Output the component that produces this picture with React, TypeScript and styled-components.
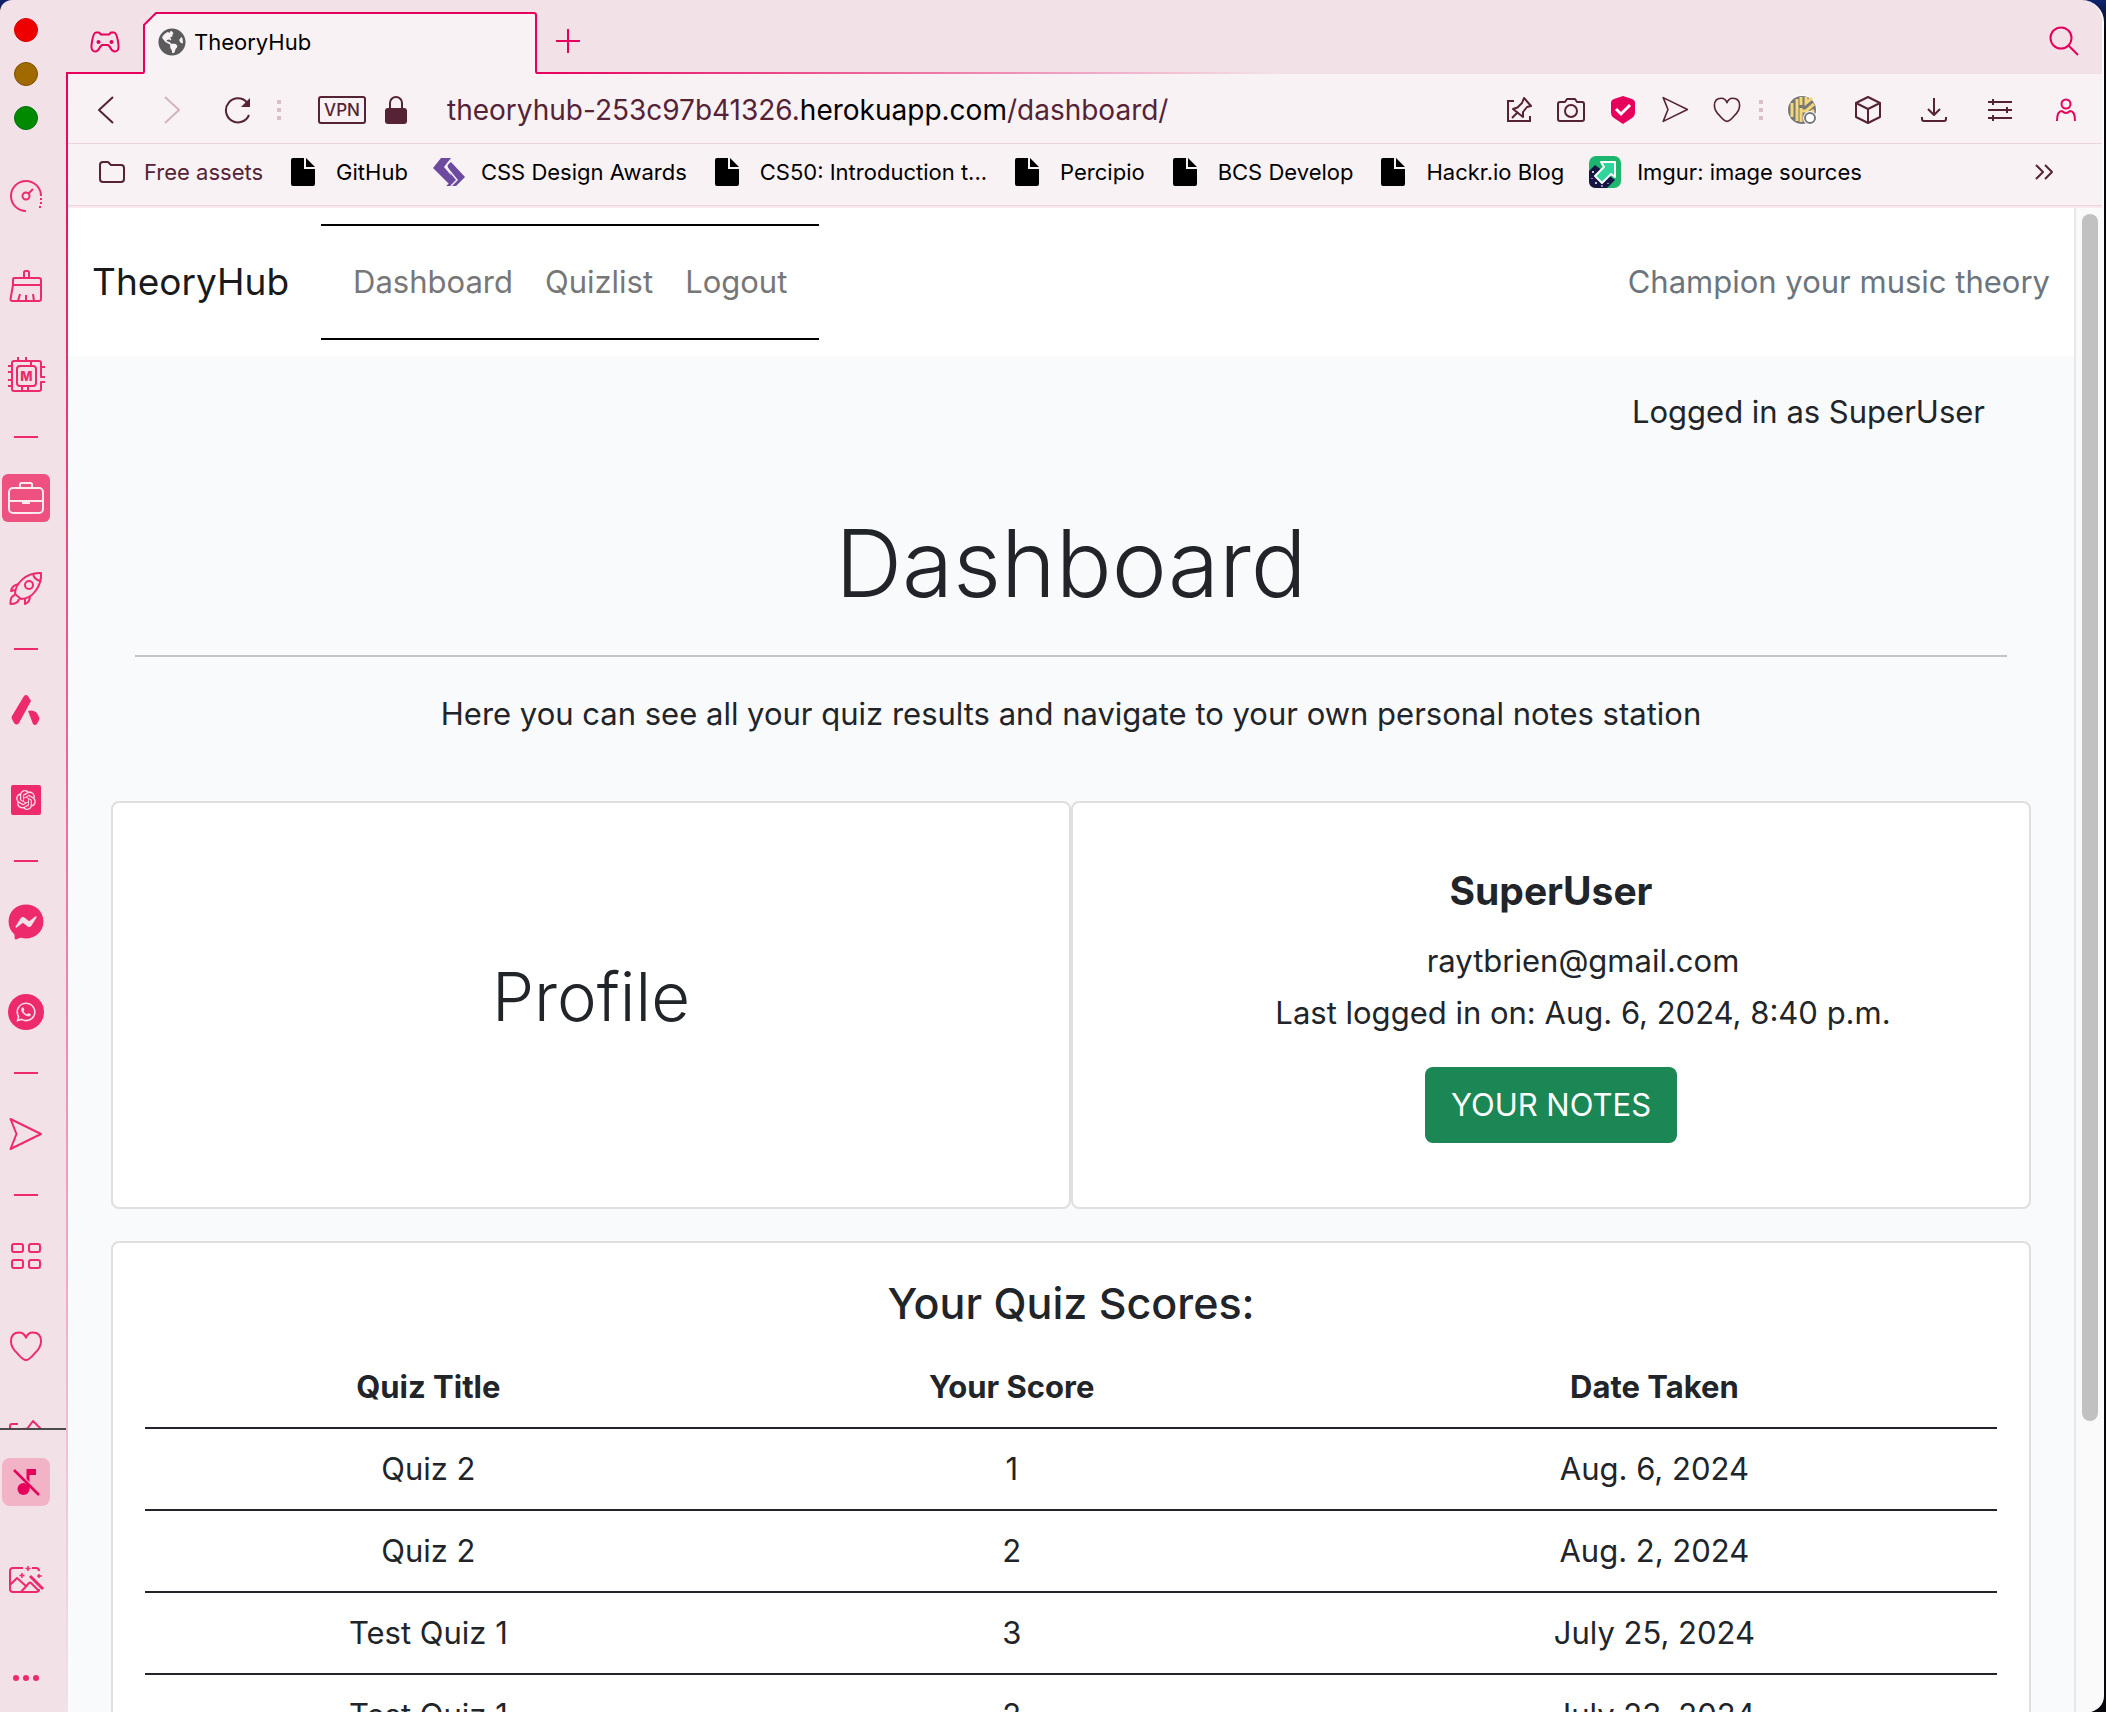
import React from "react";
import styled, { createGlobalStyle } from "styled-components";
import { FaFacebookMessenger, FaGlobeAmericas, FaWhatsapp } from "react-icons/fa";
import { RiOpenaiFill } from "react-icons/ri";

const PINK = "#e6005c";
const ROSE = "#ed2a6b";
const WINE = "#552236";
const STRIP = "#f3e1e8";
const BAR = "#f8f2f4";
const INK = "#212529";

const GlobalStyle = createGlobalStyle`
  *, *::before, *::after { box-sizing: border-box; }
  body {
    margin: 0;
    font-family: Inter, "Liberation Sans", sans-serif;
    color: ${INK};
  }
  button { font: inherit; color: inherit; background: none; border: 0; padding: 0; }
  a { color: inherit; text-decoration: none; }
  svg { display: block; flex: none; }
`;

/* ---------- window frame ---------- */

const Desktop = styled.div`
  height: 100vh;
  padding-right: 2px;
  background: linear-gradient(#10246e, #07070b 32px, #07070b);
`;

const BrowserWindow = styled.div`
  display: grid;
  grid-template-columns: 66px minmax(0, 1fr);
  height: 100%;
  overflow: hidden;
  border-right: 2px solid #fdfafb;
  border-radius: 12px 22px 16px 0;
  background: ${STRIP};
`;

/* ---------- sidebar ---------- */

const Sidebar = styled.aside`
  display: flex;
  flex-direction: column;
  min-height: 0;
  color: ${ROSE};
`;

const TrafficLights = styled.div`
  display: grid;
  gap: 20px;
  flex: none;
  padding: 18px 14px 21px;
`;

const Light = styled.button<{ $fill: string; $edge: string }>`
  width: 24px;
  height: 24px;
  border: 1px solid ${(p) => p.$edge};
  border-radius: 50%;
  background: ${(p) => p.$fill};
`;

const Dock = styled.nav`
  flex: 1;
  min-height: 0;
  overflow: hidden;
`;

const DockSlot = styled.button`
  display: grid;
  place-items: center;
  width: 52px;
  height: 90px;
`;

const DockRule = styled.div`
  width: 24px;
  height: 2px;
  margin: 15px 14px;
  background: ${ROSE};
`;

const Tile = styled.span<{ $bg: string; $fg: string; $size: number; $radius: number }>`
  display: grid;
  place-items: center;
  width: ${(p) => p.$size}px;
  height: ${(p) => p.$size}px;
  border-radius: ${(p) => p.$radius}px;
  background: ${(p) => p.$bg};
  color: ${(p) => p.$fg};
`;

const DockFooter = styled.div`
  display: grid;
  gap: 50px;
  flex: none;
  padding: 28px 0 10px;
  border-top: 2px solid #4c4a4c;
`;

const FooterButton = styled.button`
  display: grid;
  place-items: center;
  width: 52px;
  height: 48px;
`;

/* ---------- browser chrome ---------- */

const Main = styled.div`
  display: flex;
  flex-direction: column;
  min-width: 0;
  min-height: 0;
`;

const TabStrip = styled.div`
  display: flex;
  flex: none;
  height: 74px;
  color: ${PINK};
`;

const StripStart = styled.button`
  display: grid;
  place-items: center;
  width: 77px;
  padding-top: 12px;
  border-bottom: 2px solid ${PINK};
`;

const Tab = styled.div`
  position: relative;
  display: flex;
  align-items: center;
  gap: 8px;
  width: 394px;
  padding: 10px 15px 0;
  font-size: 22px;
  line-height: 28px;
  color: #000;
`;

const TabOutline = styled.svg`
  position: absolute;
  inset: 0;
`;

const TabIcon = styled(FaGlobeAmericas)`
  position: relative;
  color: #5b5b5d;
`;

const TabTitle = styled.span`
  position: relative;
`;

const StripEnd = styled.div`
  display: flex;
  flex: 1;
  align-items: center;
  justify-content: space-between;
  padding: 8px 23px 0 18px;
  background: linear-gradient(90deg, ${PINK}, transparent 740px) bottom / 100% 2px no-repeat;
`;

const Frame = styled.div`
  display: flex;
  flex-direction: column;
  flex: 1;
  min-height: 0;
  padding-left: 2px;
  background: linear-gradient(${PINK}, #ec4379 25%, #f19ab8 66%, ${STRIP});
`;

const Toolbar = styled.div`
  display: flex;
  align-items: center;
  flex: none;
  height: 70px;
  padding: 2px 3px 0 5px;
  border-bottom: 1px solid #ecd3dc;
  background: ${BAR};
  color: ${WINE};
`;

const ToolButton = styled.button<{ $width: number; $color?: string }>`
  display: grid;
  place-items: center;
  width: ${(p) => p.$width}px;
  height: 40px;
  color: ${(p) => p.$color ?? "inherit"};
`;

const Grip = styled.div`
  display: grid;
  justify-content: center;
  gap: 4px;
  width: 16px;

  i {
    width: 4px;
    height: 4px;
    background: #d8bfca;
  }
`;

const VpnBadge = styled.button`
  width: 48px;
  height: 28px;
  margin: 0 18px 0 31px;
  border: 2px solid ${WINE};
  border-radius: 3px;
  font-size: 17px;
  font-weight: 500;
  line-height: 24px;
`;

const Address = styled.div`
  flex: 1;
  margin-left: 39px;
  font-size: 28px;
  line-height: 36px;
  white-space: nowrap;

  b {
    font-weight: 400;
    color: #000;
  }
`;

const Bookmarks = styled.div`
  display: flex;
  align-items: center;
  gap: 25px;
  flex: none;
  height: 64px;
  padding: 0 48px 6px 28px;
  border-bottom: 2px solid #fbe9ef;
  background: linear-gradient(#ecd3dc, #ecd3dc) bottom / 100% 1px no-repeat ${BAR};
`;

const Bookmark = styled.a<{ $color?: string }>`
  display: flex;
  align-items: center;
  gap: 16px;
  font-size: 22px;
  line-height: 32px;
  white-space: nowrap;
  color: ${(p) => p.$color ?? "#000"};
`;

const MoreBookmarks = styled.button`
  margin-left: auto;
  color: ${WINE};
`;

/* ---------- page ---------- */

const Viewport = styled.div`
  display: flex;
  flex: 1;
  min-height: 0;
  overflow: hidden;
`;

const Page = styled.div`
  flex: 1;
  min-width: 0;
  overflow: hidden;
  background: #f9fafc;
  font-size: 31px;
  line-height: 48px;
`;

const ScrollTrack = styled.div`
  width: 28px;
  padding: 6px 4px 0 6px;
  border-left: 2px solid #e8e8ea;
  background: #fafafa;
`;

const ScrollThumb = styled.div`
  width: 16px;
  height: 80.6%;
  border-radius: 8px;
  background: #c1c1c1;
`;

const SiteHeader = styled.header`
  display: flex;
  align-items: center;
  gap: 32px;
  padding: 16px 24px;
  background: #fff;
`;

const Brand = styled.a`
  font-size: 37px;
  color: #191a1b;
`;

const NavList = styled.ul`
  display: flex;
  margin: 0;
  padding: 16px;
  border: solid #000;
  border-width: 2px 0;
  list-style: none;
`;

const NavLink = styled.a`
  display: block;
  padding: 16px;
  color: #777;
`;

const Tagline = styled.span`
  margin-left: auto;
  color: #6c757d;
`;

const Content = styled.main`
  padding: 32px 43px 0;
`;

const Intro = styled.section`
  padding: 0 24px 63px;
  text-align: center;
`;

const Session = styled.p`
  margin: 0;
  padding-right: 22px;
  text-align: right;
`;

const Title = styled.h1`
  margin: 72px 0 36px;
  font-size: 93px;
  font-weight: 350;
  line-height: 111px;
`;

const Rule = styled.hr`
  height: 2px;
  margin: 0 0 33px;
  border: 0;
  background: #c3c5c8;
`;

const Lead = styled.p`
  margin: 0;
`;

const CardRow = styled.div`
  display: grid;
  grid-template-columns: 1fr 1fr;
  margin-bottom: 32px;
`;

const Card = styled.section`
  border: 2px solid #dfdfe0;
  border-radius: 8px;
  background: #fff;
  text-align: center;
`;

const ProfileCard = styled(Card)`
  display: grid;
  place-items: center;
`;

const ProfileTitle = styled.h2`
  margin: 0 0 16px;
  font-size: 67px;
  font-weight: 350;
  line-height: 80px;
`;

const UserCard = styled(Card)`
  padding: 64px 32px;
`;

const UserName = styled.h3`
  margin: 0 0 20px;
  font-size: 39px;
  font-weight: 700;
  line-height: 48px;
`;

const UserFacts = styled.ul`
  margin: 0 0 28px;
  padding: 0 0 0 64px;
  line-height: 52px;
  list-style: none;
`;

const NotesButton = styled.button`
  height: 76px;
  padding: 0 26px;
  border-radius: 8px;
  background: #1a8754;
  color: #fff;
  display: block;
  margin: 0 auto;
`;

const ScoresCard = styled(Card)`
  padding: 32px;
`;

const ScoresTitle = styled.h3`
  margin: 0 0 16px;
  font-size: 43px;
  font-weight: 500;
  line-height: 56px;
`;

const Scores = styled.table`
  width: 100%;
  table-layout: fixed;
  border-spacing: 0;

  th,
  td {
    padding: 16px;
    border-bottom: 2px solid ${INK};
  }
  th {
    font-weight: 700;
  }
  th:nth-child(1) {
    width: 30.6%;
  }
  th:nth-child(2) {
    width: 32.4%;
  }
`;

/* ---------- icons ---------- */

type IconProps = { w: number; h: number; sw?: number; children: React.ReactNode };

const Icon = ({ w, h, sw = 2, children }: IconProps) => (
  <svg
    width={w}
    height={h}
    viewBox={`0 0 ${w} ${h}`}
    fill="none"
    stroke="currentColor"
    strokeWidth={sw}
    strokeLinejoin="round"
    aria-hidden="true"
  >
    {children}
  </svg>
);

const SpeedIcon = () => (
  <Icon w={34} h={34}>
    <path d="M17 32A15 15 0 1 1 32 17" />
    <path d="M32 19v2M32 23v2M31 27v2" />
    <circle cx="17" cy="17" r="3.5" />
    <path d="M19.5 14.500L24 10" />
  </Icon>
);

const BroomIcon = () => (
  <Icon w={34} h={34}>
    <path d="M15 9V3.500Q15 2 16.500 2h2Q20 2 20 3.500V9" />
    <path d="M5 9h25q2 0 2 2v5H4v-5q0-2 1-2z" />
    <path d="M4 16L1.500 30q0 2 2 2H30q2 0 2-2V16M9 32l2-7M17 32v-6M25 32l-1-7" />
  </Icon>
);

const ChipIcon = () => (
  <Icon w={38} h={38}>
    <path d="M34 13V6q0-2-2-2H7Q5 4 5 6v26q0 2 2 2h25q2 0 2-2v-7h4M38 20h-4v-7M34 10h4" />
    <rect x="10" y="9" width="19" height="20" rx="3" />
    <path d="M5 9H1M5 15H1M5 23H1M5 29H1M11 4V0M19 4V0M24 9V4M15 29v5M21 29v5" />
    <text x="19.500" y="24" fontSize="13" fontWeight="800" textAnchor="middle" fill="currentColor" stroke="none">
      M
    </text>
  </Icon>
);

const BriefcaseIcon = () => (
  <Icon w={38} h={36}>
    <rect x="2" y="8" width="34" height="25" rx="4" />
    <path d="M13 8V4.500Q13 3 14.500 3h9Q25 3 25 4.500V8M2 21h34" />
    <path d="M15 22.500h8" strokeWidth="3" />
  </Icon>
);

const RocketIcon = () => (
  <Icon w={34} h={34}>
    <path d="M6 23C6 13 17 1 32 2C33 14 24 28 12 28z" />
    <circle cx="20" cy="14" r="4" />
    <path d="M24 2.500Q25 9 32 10M10 13Q3 14 2 20l5-1M21 25Q21 31 16 33v-5M6 24Q1 25 1.500 33Q9 33 10 28" />
  </Icon>
);

const PeakIcon = () => (
  <svg width="30" height="32" viewBox="0 0 30 32" fill="currentColor" aria-hidden="true">
    <path d="M13 2q2-2 4 0l3 5L8 29q-2 3-5 0L1 25q-1-1 0-3z" />
    <path d="M17 17q8-2 11 6q1 1 0 3l-2 4q-2 2-4 0z" />
  </svg>
);

const PlaneIcon = ({ size }: { size: number }) => (
  <svg width={size} height={size} viewBox="0 0 34 34" fill="none" stroke="currentColor" strokeWidth="2" strokeLinejoin="round" aria-hidden="true">
    <path d="M1.500 2L32 17L1.500 32L7.500 17z" />
  </svg>
);

const HeartIcon = ({ w, h, sw = 2 }: { w: number; h: number; sw?: number }) => (
  <svg width={w} height={h} viewBox="0 0 34 32" fill="none" stroke="currentColor" strokeWidth={sw} strokeLinejoin="round" aria-hidden="true">
    <path d="M17 30Q14 30 8 23Q1.500 17 1.500 10.500Q1.500 1.500 10 1.500Q15 1.500 17 7Q19 1.500 24 1.500Q32.500 1.500 32.500 10.500Q32.500 17 26 23Q20 30 17 30z" />
  </svg>
);

const GridIcon = () => (
  <Icon w={32} h={28}>
    <rect x="2" y="2" width="11" height="8" rx="2" />
    <rect x="19" y="2" width="11" height="8" rx="2" />
    <rect x="2" y="18" width="11" height="8" rx="2" />
    <rect x="19" y="18" width="11" height="8" rx="2" />
  </Icon>
);

const PinnedIcon = ({ size }: { size: number }) => (
  <svg width={size} height={size} viewBox="0 0 28 28" fill="none" stroke="currentColor" strokeWidth="2" aria-hidden="true">
    <path d="M9 5H3v20h22v-5" />
    <path d="M19 2l7 8l-4 1l-4 5v5L8 13l4.500-1.500L17 7z" strokeLinejoin="round" />
    <path d="M13 16l-6 6" />
  </svg>
);

const PinboardsIcon = () => (
  <Icon w={36} h={36}>
    <path d="M10 6H4Q2 6 2 8v24q0 2 2 2h24q2 0 2-2v-6" />
    <path d="M13 12Q15 10 19 11L25 3L35 13L27 20Q27 25 25 26z" />
    <path d="M18 19l-9 9" />
  </Icon>
);

const MutedIcon = () => (
  <svg width="30" height="30" viewBox="0 0 30 30" fill={PINK} aria-hidden="true">
    <circle cx="12.500" cy="22" r="6" />
    <path d="M15.500 2H25v6h-6.500v14h-3z" />
    <path d="M4 2.500L28.500 27" stroke="#f3b3c7" strokeWidth="2.500" />
    <path d="M3 3L28 28" stroke={PINK} strokeWidth="2.500" />
  </svg>
);

const ImageWandIcon = () => (
  <Icon w={38} h={30}>
    <path d="M16 3H6Q3 3 3 6v18q0 3 3 3h23q3 0 3-3M25 3h4q3 0 3 3" />
    <path d="M3 20l7-7l10 9M14 27l8-9q1-1 2 0l8 8" />
    <path d="M23 11L36 24" strokeWidth="3" />
    <path d="M21 1v5M18.500 3.500h5M15 8v5M12.500 10.500h5M32 9v4M30 11h5" strokeWidth="1.500" />
  </Icon>
);

const DotsIcon = () => (
  <svg width="28" height="8" viewBox="0 0 28 8" fill="currentColor" aria-hidden="true">
    <circle cx="4" cy="4" r="3" />
    <circle cx="14" cy="4" r="3" />
    <circle cx="24" cy="4" r="3" />
  </svg>
);

const GamepadIcon = () => (
  <Icon w={30} h={22}>
    <path d="M6 1.500h3l2 2h8l2-2h3Q27 1.500 28.500 14Q29 20.500 25 20.500Q22 20.500 20 16l-2-2h-6l-2 2Q8 20.500 5 20.500Q1 20.500 1.500 14Q3 1.500 6 1.500z" />
    <circle cx="8.500" cy="11" r="2" fill="currentColor" stroke="none" />
    <circle cx="21.500" cy="11" r="2" fill="currentColor" stroke="none" />
  </Icon>
);

const PlusIcon = () => (
  <Icon w={26} h={26}>
    <path d="M13 1v24M1 13h24" />
  </Icon>
);

const SearchIcon = () => (
  <Icon w={30} h={30}>
    <circle cx="12" cy="12" r="10.500" />
    <path d="M19.500 19.500L29 29" />
  </Icon>
);

const BackIcon = () => (
  <Icon w={18} h={28}>
    <path d="M16 1L2 14l14 13" />
  </Icon>
);

const ForwardIcon = () => (
  <Icon w={18} h={28}>
    <path d="M2 1l14 13L2 27" />
  </Icon>
);

const ReloadIcon = () => (
  <Icon w={28} h={28}>
    <path d="M25 19A12 12 0 1 1 23 6.500" />
    <path d="M26 2v9h-9z" fill="currentColor" stroke="none" />
  </Icon>
);

const LockIcon = () => (
  <svg width="24" height="28" viewBox="0 0 24 28" aria-hidden="true">
    <rect x="1" y="12" width="22" height="16" rx="3" fill={WINE} />
    <path d="M6 13V7a6 6 0 0 1 12 0v6" fill="none" stroke={WINE} strokeWidth="2" />
  </svg>
);

const CameraIcon = () => (
  <Icon w={28} h={26}>
    <path d="M3 5h5l2-3h8l2 3h5q2 0 2 2v15q0 2-2 2H3q-2 0-2-2V7q0-2 2-2z" />
    <circle cx="14" cy="14" r="6" />
  </Icon>
);

const ShieldIcon = () => (
  <svg width="26" height="28" viewBox="0 0 26 28" aria-hidden="true">
    <path d="M13 0l9 3q3 1 3 4v10q0 3-3 5l-9 6l-9-6q-3-2-3-5V7q0-3 3-4z" fill={PINK} />
    <path d="M6 13l5 5l9-9" fill="none" stroke="#fff" strokeWidth="3" />
  </svg>
);

const MazeIcon = () => (
  <svg width="30" height="30" viewBox="0 0 30 30" aria-hidden="true">
    <circle cx="15" cy="15" r="15" fill="#fff" />
    <circle cx="15" cy="15" r="14" fill="#777" />
    <g fill="none" stroke="#f4d77a" strokeWidth="3">
      <path d="M5 8v14M10 4v22M14 13v14M14 2v8M19 2v6l6-5M14 16h5l8-7M18 21l9-6" />
    </g>
    <circle cx="23" cy="23" r="7" fill="#fff" />
    <circle cx="23" cy="23" r="5" fill="#fff" stroke="#777" strokeWidth="2" />
  </svg>
);

const CubeIcon = () => (
  <Icon w={28} h={28}>
    <path d="M14 1l12 6v14l-12 6l-12-6V7zM2 7l12 6l12-6M14 13v14" />
  </Icon>
);

const DownloadIcon = () => (
  <Icon w={28} h={26}>
    <path d="M14 1v17M8 12l6 6l6-6M2 20v2q0 2 2 2h20q2 0 2-2v-2" />
  </Icon>
);

const SlidersIcon = () => (
  <Icon w={26} h={24}>
    <path d="M1 4h24M1 12h24M1 20h24M6 1v6M20 9v6M6 17v6" />
  </Icon>
);

const PersonIcon = () => (
  <Icon w={22} h={24}>
    <circle cx="11" cy="6" r="4.500" />
    <path d="M2 23Q2 13 7 13Q11 17 15 13Q20 13 20 23" />
  </Icon>
);

const FolderIcon = () => (
  <Icon w={32} h={24}>
    <path d="M7 2h5l3 3h10q3 0 3 3v11q0 3-3 3H7q-3 0-3-3V5q0-3 3-3z" />
  </Icon>
);

const FileIcon = () => (
  <svg width="32" height="28" viewBox="0 0 32 28" aria-hidden="true">
    <path d="M5 0h11v11h11v15q0 2-2 2H5q-2 0-2-2V2q0-2 2-2z" />
    <path d="M18 0l9 9h-9z" />
  </svg>
);

const RibbonIcon = () => (
  <svg width="32" height="30" viewBox="0 0 32 30" fill="#6b4a9f" aria-hidden="true">
    <path d="M8 1h10l-7 9l11 13l-5 5L0 11z" />
    <path d="M13 29l7-6L14 8l4-3l14 15l-9 9z" />
    <path d="M16 5L13 9.500L24 23l-6 6" fill="none" stroke={BAR} strokeWidth="1.500" />
  </svg>
);

const ImgurIcon = () => (
  <svg width="32" height="32" viewBox="0 0 32 32" aria-hidden="true">
    <rect width="32" height="32" rx="7" fill="#1bb76e" />
    <path d="M0 15L6 9L26 24L18 32H7Q0 32 0 25z" fill="#171544" />
    <path d="M12 6H26V21L22 18L13 27L6 20L15 11z" fill="#2fd69b" stroke="#fff" strokeWidth="2" strokeLinejoin="round" />
    <path d="M4 15v2M3 16h2M7 26v2M6 27h2M13 29v2M3 22v1M19 27v1" stroke="#fff" />
  </svg>
);

const ChevronsIcon = () => (
  <Icon w={20} h={16}>
    <path d="M2 1l7 7l-7 7M11 1l7 7l-7 7" />
  </Icon>
);

/* ---------- data ---------- */

const bookmarks: { label: string; icon: React.ReactNode; color?: string }[] = [
  { label: "Free assets", icon: <FolderIcon />, color: WINE },
  { label: "GitHub", icon: <FileIcon /> },
  { label: "CSS Design Awards", icon: <RibbonIcon /> },
  { label: "CS50: Introduction t...", icon: <FileIcon /> },
  { label: "Percipio", icon: <FileIcon /> },
  { label: "BCS Develop", icon: <FileIcon /> },
  { label: "Hackr.io Blog", icon: <FileIcon /> },
  { label: "Imgur: image sources", icon: <ImgurIcon /> },
];

const dock: ({ name: string; icon: React.ReactNode } | null)[] = [
  { name: "Speed dial", icon: <SpeedIcon /> },
  { name: "Cleaner", icon: <BroomIcon /> },
  { name: "Limiter", icon: <ChipIcon /> },
  null,
  {
    name: "Workspace",
    icon: (
      <Tile $bg="#ee5080" $fg="#fdeaf0" $size={48} $radius={6}>
        <BriefcaseIcon />
      </Tile>
    ),
  },
  { name: "Launch", icon: <RocketIcon /> },
  null,
  { name: "Aria", icon: <PeakIcon /> },
  {
    name: "ChatGPT",
    icon: (
      <Tile $bg={ROSE} $fg="#fbdde7" $size={30} $radius={2}>
        <RiOpenaiFill size={24} />
      </Tile>
    ),
  },
  null,
  { name: "Messenger", icon: <FaFacebookMessenger size={36} /> },
  {
    name: "WhatsApp",
    icon: (
      <Tile $bg={ROSE} $fg="#fbdde7" $size={36} $radius={18}>
        <FaWhatsapp size={22} />
      </Tile>
    ),
  },
  null,
  { name: "Flow", icon: <PlaneIcon size={34} /> },
  null,
  { name: "Tab overview", icon: <GridIcon /> },
  { name: "Favourites", icon: <HeartIcon w={34} h={31} /> },
  { name: "Pinboards", icon: <PinboardsIcon /> },
];

const scores = [
  { quiz: "Quiz 2", score: 1, date: "Aug. 6, 2024" },
  { quiz: "Quiz 2", score: 2, date: "Aug. 2, 2024" },
  { quiz: "Test Quiz 1", score: 3, date: "July 25, 2024" },
  { quiz: "Test Quiz 1", score: 2, date: "July 23, 2024" },
];

const GripDots = () => (
  <Grip>
    <i />
    <i />
    <i />
  </Grip>
);

/* ---------- app ---------- */

export default function App() {
  return (
    <Desktop>
      <GlobalStyle />
      <BrowserWindow>
        <Sidebar>
          <TrafficLights>
            <Light $fill="#ee0000" $edge="#d80000" aria-label="Close" />
            <Light $fill="#a06a00" $edge="#7d4f00" aria-label="Minimise" />
            <Light $fill="#008a00" $edge="#006f10" aria-label="Zoom" />
          </TrafficLights>
          <Dock>
            {dock.map((entry, i) =>
              entry ? (
                <DockSlot key={i} aria-label={entry.name}>
                  {entry.icon}
                </DockSlot>
              ) : (
                <DockRule key={i} />
              )
            )}
          </Dock>
          <DockFooter>
            <FooterButton aria-label="Music off">
              <Tile $bg="#f3b3c7" $fg={PINK} $size={48} $radius={8}>
                <MutedIcon />
              </Tile>
            </FooterButton>
            <FooterButton aria-label="Wallpaper">
              <ImageWandIcon />
            </FooterButton>
            <FooterButton aria-label="More">
              <DotsIcon />
            </FooterButton>
          </DockFooter>
        </Sidebar>

        <Main>
          <TabStrip>
            <StripStart aria-label="GX corner">
              <GamepadIcon />
            </StripStart>
            <Tab>
              <TabOutline width="394" height="74" viewBox="0 0 394 74" fill={BAR} stroke={PINK} strokeWidth="2" aria-hidden="true">
                <path d="M0 73Q1 73 1 71V25L13 13H391Q393 13 393 15V71Q393 73 394 73V76H0z" stroke="none" />
                <path d="M0 73Q1 73 1 71V25L13 13H391Q393 13 393 15V71Q393 73 394 73" fill="none" />
              </TabOutline>
              <TabIcon size={28} />
              <TabTitle>TheoryHub</TabTitle>
            </Tab>
            <StripEnd>
              <button aria-label="New tab">
                <PlusIcon />
              </button>
              <button aria-label="Search tabs">
                <SearchIcon />
              </button>
            </StripEnd>
          </TabStrip>

          <Frame>
            <Toolbar>
              <ToolButton $width={66} aria-label="Back"><BackIcon /></ToolButton>
              <ToolButton $width={66} $color="#d3b4c1" aria-label="Forward"><ForwardIcon /></ToolButton>
              <ToolButton $width={66} aria-label="Reload"><ReloadIcon /></ToolButton>
              <GripDots />
              <VpnBadge>VPN</VpnBadge>
              <LockIcon />
              <Address>
                theoryhub-253c97b41326.<b>herokuapp.com</b>/dashboard/
              </Address>
              <ToolButton $width={52} aria-label="Pin page"><PinnedIcon size={28} /></ToolButton>
              <ToolButton $width={52} aria-label="Snapshot"><CameraIcon /></ToolButton>
              <ToolButton $width={52} aria-label="Ad blocker"><ShieldIcon /></ToolButton>
              <ToolButton $width={52} aria-label="Send"><PlaneIcon size={27} /></ToolButton>
              <ToolButton $width={52} aria-label="Bookmark page"><HeartIcon w={30} h={26} /></ToolButton>
              <GripDots />
              <ToolButton $width={66} aria-label="Extension"><MazeIcon /></ToolButton>
              <ToolButton $width={66} aria-label="Extensions"><CubeIcon /></ToolButton>
              <ToolButton $width={66} aria-label="Downloads"><DownloadIcon /></ToolButton>
              <ToolButton $width={66} aria-label="Easy setup"><SlidersIcon /></ToolButton>
              <ToolButton $width={66} $color={PINK} aria-label="Profile"><PersonIcon /></ToolButton>
            </Toolbar>
            <Bookmarks>
              {bookmarks.map((b) => (
                <Bookmark key={b.label} href="#" $color={b.color}>
                  {b.icon}
                  {b.label}
                </Bookmark>
              ))}
              <MoreBookmarks aria-label="More bookmarks">
                <ChevronsIcon />
              </MoreBookmarks>
            </Bookmarks>

            <Viewport>
              <Page>
                <SiteHeader>
                  <Brand href="#">TheoryHub</Brand>
                  <NavList>
                    <li><NavLink href="#">Dashboard</NavLink></li>
                    <li><NavLink href="#">Quizlist</NavLink></li>
                    <li><NavLink href="#">Logout</NavLink></li>
                  </NavList>
                  <Tagline>Champion your music theory</Tagline>
                </SiteHeader>

                <Content>
                  <Intro>
                    <Session>Logged in as SuperUser</Session>
                    <Title>Dashboard</Title>
                    <Rule />
                    <Lead>Here you can see all your quiz results and navigate to your own personal notes station</Lead>
                  </Intro>

                  <CardRow>
                    <ProfileCard>
                      <ProfileTitle>Profile</ProfileTitle>
                    </ProfileCard>
                    <UserCard>
                      <UserName>SuperUser</UserName>
                      <UserFacts>
                        <li>raytbrien@gmail.com</li>
                        <li>Last logged in on: Aug. 6, 2024, 8:40 p.m.</li>
                      </UserFacts>
                      <NotesButton>YOUR NOTES</NotesButton>
                    </UserCard>
                  </CardRow>

                  <ScoresCard>
                    <ScoresTitle>Your Quiz Scores:</ScoresTitle>
                    <Scores>
                      <thead>
                        <tr>
                          <th scope="col">Quiz Title</th>
                          <th scope="col">Your Score</th>
                          <th scope="col">Date Taken</th>
                        </tr>
                      </thead>
                      <tbody>
                        {scores.map((s) => (
                          <tr key={s.date}>
                            <td>{s.quiz}</td>
                            <td>{s.score}</td>
                            <td>{s.date}</td>
                          </tr>
                        ))}
                      </tbody>
                    </Scores>
                  </ScoresCard>
                </Content>
              </Page>
              <ScrollTrack>
                <ScrollThumb />
              </ScrollTrack>
            </Viewport>
          </Frame>
        </Main>
      </BrowserWindow>
    </Desktop>
  );
}
